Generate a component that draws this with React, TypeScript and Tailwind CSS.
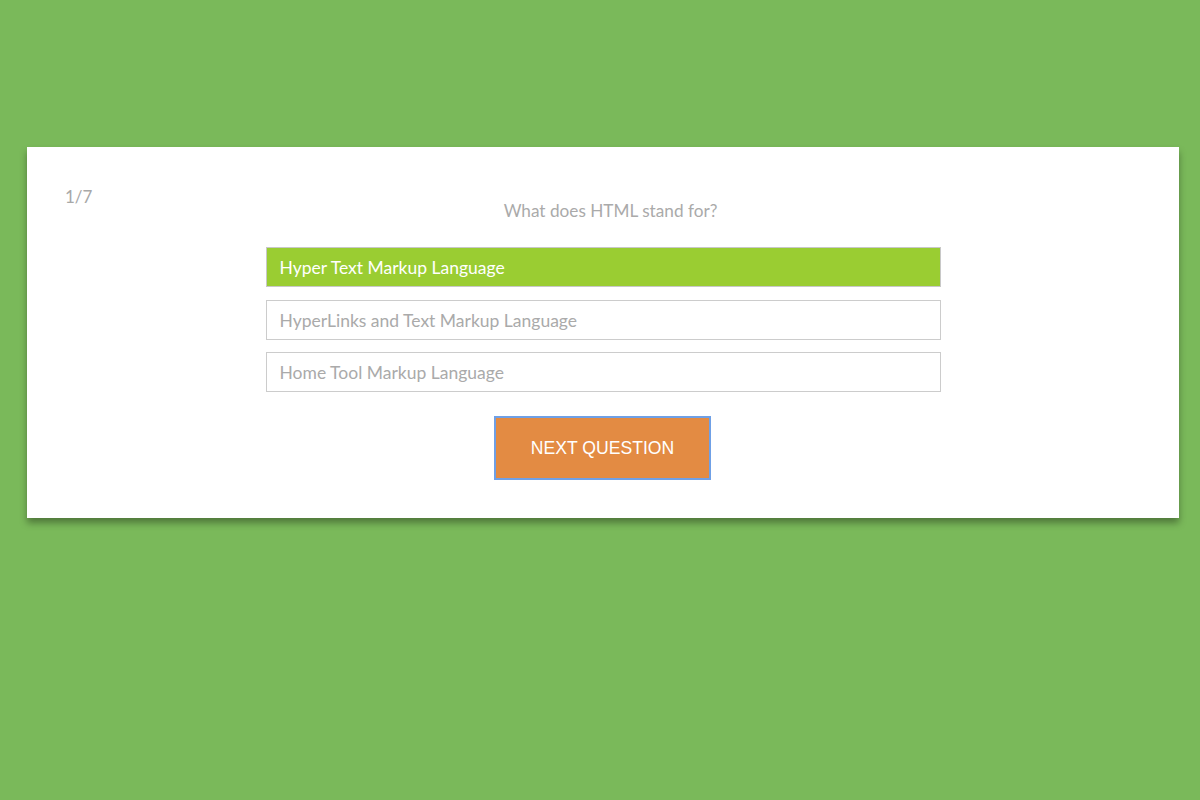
import React from "react";

export default function App() {
  const options = [
    "Hyper Text Markup Language",
    "HyperLinks and Text Markup Language",
    "Home Tool Markup Language",
  ];
  return (
    <div className="w-[1200px] h-[800px] bg-[#7ab95a] pt-[147px]" style={{ fontFamily: "Lato, 'Open Sans', sans-serif" }}>
      <div className="ml-[27px] w-[1152px] bg-white pt-[38px] pb-[38px] px-[38px] shadow-[0_5px_7px_rgba(0,0,0,0.35)]">
        <div className="h-[14px] text-[17px] leading-[24px] text-[#a8a8a8]">1/7</div>
        <div className="text-center text-[17.2px] leading-[24px] text-[#aaaaaa] pl-[15px]">What does HTML stand for?</div>
        <div className="mt-[24px] flex flex-col items-center">
          {options.map((o, i) => (
            <div
              key={o}
              className={
                "w-[675px] h-[40px] flex items-center pl-[13px] pt-[2px] text-[17.5px] border " +
                (i === 0
                  ? "bg-[#9acd32] border-[#c8c8c8] text-white"
                  : "bg-white border-[#cccccc] text-[#aaaaaa] mt-[13px]")
              }
              style={i === 2 ? { marginTop: 12 } : undefined}
            >
              {o}
            </div>
          ))}
          <button
            className="mt-[24px] w-[217px] h-[64px] bg-[#e38b43] border-2 border-[#6fa0e6] text-white text-[17.6px] -ml-[1px]"
            style={{ fontFamily: "'Liberation Sans', Arial, sans-serif" }}
          >
            NEXT QUESTION
          </button>
        </div>
      </div>
    </div>
  );
}
